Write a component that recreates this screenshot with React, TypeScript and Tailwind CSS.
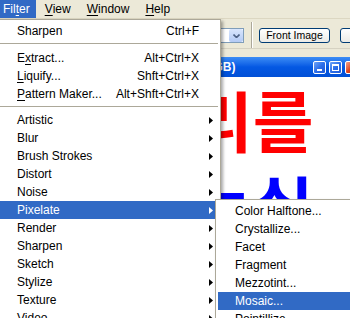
import React from 'react';

type Item =
  | { kind: 'item'; label: React.ReactNode; shortcut?: string; sub?: boolean; active?: boolean }
  | { kind: 'sep'; h: string };

const mainItems: Item[] = [
  { kind: 'item', label: 'Sharpen', shortcut: 'Ctrl+F' },
  { kind: 'sep', h: 'h-[9px]' },
  { kind: 'item', label: <>E<u className="underline-offset-2">x</u>tract...</>, shortcut: 'Alt+Ctrl+X' },
  { kind: 'item', label: <><u className="underline-offset-2">L</u>iquify...</>, shortcut: 'Shft+Ctrl+X' },
  { kind: 'item', label: <><u className="underline-offset-2">P</u>attern Maker...</>, shortcut: 'Alt+Shft+Ctrl+X' },
  { kind: 'sep', h: 'h-[8px]' },
  { kind: 'item', label: 'Artistic', sub: true },
  { kind: 'item', label: 'Blur', sub: true },
  { kind: 'item', label: 'Brush Strokes', sub: true },
  { kind: 'item', label: 'Distort', sub: true },
  { kind: 'item', label: 'Noise', sub: true },
  { kind: 'item', label: 'Pixelate', sub: true, active: true },
  { kind: 'item', label: 'Render', sub: true },
  { kind: 'item', label: 'Sharpen', sub: true },
  { kind: 'item', label: 'Sketch', sub: true },
  { kind: 'item', label: 'Stylize', sub: true },
  { kind: 'item', label: 'Texture', sub: true },
  { kind: 'item', label: 'Video', sub: true },
];

const pixelateItems = [
  'Color Halftone...',
  'Crystallize...',
  'Facet',
  'Fragment',
  'Mezzotint...',
  'Mosaic...',
  'Pointillize...',
];

// Small black triangle used for submenu arrows
function Arrow({ white }: { white?: boolean }) {
  return (
    <svg width="4" height="7" viewBox="0 0 4 7" className="mr-[5px] shrink-0">
      <path d="M0 0 L4 3.5 L0 7 Z" fill={white ? '#ffffff' : '#000000'} />
    </svg>
  );
}

function MenuRow({ item }: { item: Item }) {
  if (item.kind === 'sep') {
    return (
      <div className={`${item.h} pt-[3px]`}>
        <div className="h-px bg-[#ACA899]" />
      </div>
    );
  }
  return (
    <div
      className={`flex h-[18px] items-center pl-[17px] ${
        item.active ? 'bg-[#316AC5] text-white' : 'text-black'
      }`}
    >
      <span className="whitespace-nowrap">{item.label}</span>
      {item.shortcut && (
        <span className="ml-auto pr-[19px] whitespace-nowrap">{item.shortcut}</span>
      )}
      {item.sub && (
        <>
          <span className="flex-1" />
          <Arrow white={item.active} />
        </>
      )}
    </div>
  );
}

function TitleButton({ kind }: { kind: 'min' | 'max' | 'close' }) {
  const bg =
    kind === 'close'
      ? 'bg-gradient-to-br from-[#F0A08A] via-[#E0461F] to-[#C23A12]'
      : 'bg-gradient-to-br from-[#6FA3F7] via-[#2D6FE9] to-[#1E58D8]';
  return (
    <div className={`relative flex h-[13px] w-[13px] items-center justify-center rounded-[2px] border border-white ${bg}`}>
      {kind === 'min' && <div className="mt-[6px] h-[2px] w-[5px] bg-white" />}
      {kind === 'max' && <div className="h-[7px] w-[7px] border border-white border-t-2" />}
    </div>
  );
}

export default function App() {
  return (
    <div className="relative h-[318px] w-[350px] overflow-hidden bg-[#ECE9D8] font-['Liberation_Sans',Arial,sans-serif] text-[12px] leading-none text-black">
      {/* Menu bar */}
      <div className="flex h-[19px] items-start gap-[2px] border-b border-[#DCD7C2]">
        <div className="-ml-[4px] flex h-[18px] items-center bg-[#316AC5] pl-[7px] pr-[6px] text-white">
          Fil<u className="underline-offset-2">t</u>er
        </div>
        {[
          ['V', 'iew'],
          ['W', 'indow'],
          ['H', 'elp'],
        ].map(([k, rest]) => (
          <div key={k} className="flex h-[18px] items-center px-[7px]">
            <u className="underline-offset-2">{k}</u>
            {rest}
          </div>
        ))}
      </div>

      {/* Options bar */}
      <div className="flex h-[30px] items-start border-b border-[#D6D2C2] pl-[150px] pt-[9px]">
        <div className="flex h-[15px] w-[94px] shrink-0 items-stretch border border-[#7F9DB9] bg-white">
          <span className="flex-1" />
          <div className="flex w-[14px] items-center justify-center rounded-[2px] bg-gradient-to-b from-[#D9E6FD] to-[#B3CAF5]">
            <svg width="7" height="4" viewBox="0 0 7 4">
              <path d="M0.5 0.5 L3.5 3.5 L6.5 0.5" stroke="#4D6185" strokeWidth="1.6" fill="none" />
            </svg>
          </div>
        </div>
        <div className="ml-[7px] -mt-[6px] h-[26px] w-[2px] shrink-0 border-l border-[#ACA899] bg-white" />
        <div className="ml-[6px] flex h-[15px] w-[71px] shrink-0 items-center justify-center whitespace-nowrap rounded-[3px] border border-[#003C74] bg-gradient-to-b from-white to-[#ECEBE6] text-[10.5px]">
          Front Image
        </div>
        <div className="ml-[10px] h-[15px] w-[70px] shrink-0 rounded-[3px] border border-[#003C74] bg-gradient-to-b from-white to-[#ECEBE6]" />
      </div>

      {/* Workspace with image window */}
      <div className="pl-[72px] pt-[8px]">
        <div className="w-[300px] bg-white">
          <div className="flex h-[20px] items-center bg-gradient-to-b from-[#3B8CF5] via-[#0458E3] to-[#0150D6] pl-[4px] pr-[14px]">
            <div className="mr-[1px] h-[16px] w-[16px]" />
            <span className="flex-1 whitespace-nowrap font-bold text-white">Untitled-1 @ 100% (RGB)</span>
            <div className="flex gap-[3px]">
              <TitleButton kind="min" />
              <TitleButton kind="max" />
              <TitleButton kind="close" />
            </div>
          </div>
          <div className="h-[240px] pl-[120px] pt-[8px] font-['Noto_Sans_CJK_KR',sans-serif] text-[66px] font-bold leading-none">
            <div className="whitespace-nowrap text-[#FF0000]">리를</div>
            <div className="mt-[19px] whitespace-nowrap text-[#0000FF]">는실</div>
          </div>
        </div>
      </div>

      {/* Filter dropdown */}
      <div className="absolute left-[-3px] top-[19px] w-[224px] border border-[#ACA899] bg-white p-[2px] shadow-[2px_2px_3px_rgba(0,0,0,0.35)]">
        {mainItems.map((it, i) => (
          <MenuRow key={i} item={it} />
        ))}
      </div>

      {/* Pixelate submenu */}
      <div className="absolute left-[215px] top-[199px] w-[140px] border border-[#ACA899] bg-white p-[2px] shadow-[2px_2px_3px_rgba(0,0,0,0.35)]">
        {pixelateItems.map((label) => (
          <div
            key={label}
            className={`flex h-[18px] items-center whitespace-nowrap pl-[17px] ${
              label === 'Mosaic...' ? 'bg-[#316AC5] text-white' : ''
            }`}
          >
            {label}
          </div>
        ))}
      </div>
    </div>
  );
}
